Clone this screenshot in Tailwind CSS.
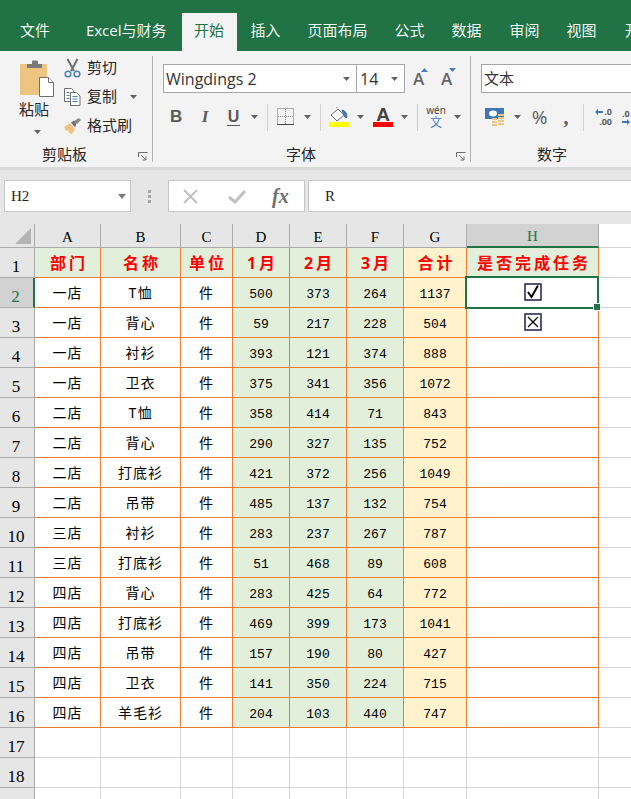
<!DOCTYPE html><html lang="zh-CN">
<head>
  <meta charset="UTF-8">
  <title>Excel</title>
  <script src="https://cdn.jsdelivr.net/npm/@tailwindcss/browser@4"></script>
</head>
<body class="w-[631px] h-[799px] overflow-hidden bg-white text-[#262626] font-['Noto_Sans','Noto_Sans_CJK_SC',sans-serif]">

  <!-- tabs -->
  <div class="h-[51px] bg-[#217346] flex items-end text-[15px] text-white/95 whitespace-nowrap overflow-hidden">
    <div class="shrink-0 ml-[20px] h-[38px] leading-[34px]">文件</div>
    <div class="shrink-0 ml-[36px] h-[38px] leading-[34px]">Excel与财务</div>
    <div class="shrink-0 ml-[15px] w-[55px] h-[38px] leading-[34px] text-center bg-[#f3f3f3] text-[#217346]">开始</div>
    <div class="shrink-0 ml-[14px] h-[38px] leading-[34px]">插入</div>
    <div class="shrink-0 ml-[27px] h-[38px] leading-[34px]">页面布局</div>
    <div class="shrink-0 ml-[27px] h-[38px] leading-[34px]">公式</div>
    <div class="shrink-0 ml-[27px] h-[38px] leading-[34px]">数据</div>
    <div class="shrink-0 ml-[28px] h-[38px] leading-[34px]">审阅</div>
    <div class="shrink-0 ml-[27px] h-[38px] leading-[34px]">视图</div>
    <div class="shrink-0 ml-[28px] h-[38px] leading-[34px]">开</div>
  </div>

  <!-- ribbon -->
  <div class="h-[119px] bg-[#f3f3f3] border-b-[3px] border-[#d9d9d9] flex overflow-hidden">

    <!-- clipboard -->
    <div class="relative w-[153px] h-[106px] mt-[5px] border-r border-[#b4b4b4] shrink-0">
      <div class="flex">
        <div class="ml-[19px] w-[36px] flex flex-col items-center">
          <svg class="mt-[4px]" width="36" height="37" viewBox="0 0 36 37">
            <rect x="1" y="4" width="27" height="31" rx="1" fill="#edc581"/>
            <path d="M8 8V4h5V1.500q0-1 1-1h4q1 0 1 1V4h4v4z" fill="#7a7a7a"/>
            <path d="M20.500 17.500h9l5 5v14h-14z" fill="#fff" stroke="#6e6e6e"/>
            <path d="M29.500 17.500v5h5" fill="#fff" stroke="#6e6e6e"/>
          </svg>
          <div class="text-[15px] leading-[20px] mt-[2px] ml-[-6px] w-[36px] text-center">粘贴</div>
          <svg class="mt-[11px]" width="7" height="4"><path d="M0 0h7L3.500 4z" fill="#606060"/></svg>
        </div>
        <div class="ml-[9px] flex flex-col">
          <div class="h-[29px] mt-[-3px] flex items-center gap-[6px] text-[15px]">
            <svg width="17" height="20" viewBox="0 0 17 20" fill="none">
              <path d="M3.500 1l6.500 12M13.500 1L7 13" stroke="#6e6e6e" stroke-width="2"/>
              <circle cx="4" cy="16" r="2.800" stroke="#4a7fb8" stroke-width="1.500"/>
              <circle cx="13" cy="16" r="2.800" stroke="#4a7fb8" stroke-width="1.500"/>
            </svg>
            <span>剪切</span>
          </div>
          <div class="h-[29px] flex items-center gap-[6px] text-[15px]">
            <svg width="17" height="18" viewBox="0 0 17 18" fill="none">
              <path d="M.5.500h7l2 2v11H.5z" fill="#fff" stroke="#6e6e6e"/>
              <path d="M6.500 4.500h6l3.500 3.500v9.500H6.500z" fill="#fff" stroke="#6e6e6e"/>
              <path d="M2.500 4.500h3M2.500 7.500h3M2.500 10.500h3" stroke="#4a7fb8"/>
              <path d="M8.500 8.500h5M8.500 11h5M8.500 13.500h5" stroke="#4a7fb8"/>
            </svg>
            <span>复制</span>
            <svg class="ml-[7px]" width="7" height="4"><path d="M0 0h7L3.500 4z" fill="#606060"/></svg>
          </div>
          <div class="h-[29px] flex items-center gap-[6px] text-[15px]">
            <svg width="17" height="16" viewBox="0 0 17 16">
              <path d="M0 9l6-4 5 6-3 5-3-1-1-3-2 1z" fill="#edc581"/>
              <path d="M7 4.500l3-2 2.500 3-1.500 4z" fill="#6e6e6e"/>
              <path d="M10 3l5-3 2 2-4 4z" fill="#8a8a8a"/>
            </svg>
            <span>格式刷</span>
          </div>
        </div>
      </div>
      <div class="absolute left-[42px] top-[88px] text-[15px] leading-[20px]">剪贴板</div>
      <svg class="absolute left-[138px] top-[96px]" width="10" height="10" fill="none" stroke="#6e6e6e"><path d="M.5 5V.500H9.500M3 3l5 5M8 4.500V8H4.500"/></svg>
    </div>

    <!-- font -->
    <div class="relative w-[318px] h-[106px] mt-[5px] border-r border-[#b4b4b4] shrink-0">
      <div class="flex items-center mt-[8px] h-[29px]">
        <div class="ml-[10px] w-[194px] h-[29px] bg-white border border-[#a6a6a6] flex items-center justify-between pl-[2px] pr-[6px] text-[16px]">
          <span class="font-['Open_Sans'] text-[#333]">Wingdings 2</span>
          <svg width="7" height="4"><path d="M0 0h7L3.500 4z" fill="#606060"/></svg>
        </div>
        <div class="ml-[-1px] w-[49px] h-[29px] bg-white border border-[#a6a6a6] flex items-center justify-between pl-[3px] pr-[6px] text-[16px]">
          <span class="font-['Open_Sans'] text-[#333]">14</span>
          <svg width="7" height="4"><path d="M0 0h7L3.500 4z" fill="#606060"/></svg>
        </div>
        <div class="ml-[8px] relative w-[16px] text-[17px] leading-[20px] font-semibold text-[#666] font-['Open_Sans']">A<svg class="absolute left-[8px] top-[-1px]" width="7" height="4"><path d="M0 4h7L3.500 0z" fill="#4a7fb8"/></svg></div>
        <div class="ml-[12px] relative w-[16px] text-[17px] leading-[20px] font-semibold text-[#666] font-['Open_Sans']">A<svg class="absolute left-[8px] top-[-1px]" width="7" height="4"><path d="M0 0h7L3.500 4z" fill="#4a7fb8"/></svg></div>
      </div>
      <div class="flex items-center mt-[10px] h-[28px] text-[#5a5a5a]">
        <span class="ml-[17px] w-[12px] text-center font-bold text-[17px] font-['Liberation_Sans']">B</span>
        <span class="ml-[17px] w-[12px] text-center font-bold italic text-[17px] font-['Liberation_Serif']">I</span>
        <span class="ml-[16px] w-[13px] text-center font-bold text-[16px] leading-[17px] border-b-[1.500px] border-[#555] font-['Liberation_Sans']">U</span>
        <svg class="ml-[11px]" width="7" height="4"><path d="M0 0h7L3.500 4z" fill="#606060"/></svg>
        <div class="ml-[9px] w-px h-[27px] bg-[#d0d0d0]"></div>
        <svg class="ml-[9px]" width="18" height="18" fill="none"><rect x=".5" y=".5" width="16" height="16" stroke="#666" stroke-dasharray="1 1"/><path d="M8.500 1v16M1 8.500h16" stroke="#888" stroke-dasharray="1 1"/><path d="M0 16.500h17" stroke="#444"/></svg>
        <svg class="ml-[9px]" width="7" height="4"><path d="M0 0h7L3.500 4z" fill="#606060"/></svg>
        <div class="ml-[9px] w-px h-[27px] bg-[#d0d0d0]"></div>
        <div class="ml-[8px] w-[20px] flex flex-col items-center">
          <svg width="20" height="15" viewBox="0 0 20 15" fill="none"><path d="M2 8l7-6 6 6-7 6z" fill="#fff" stroke="#6e6e6e"/><path d="M8 1V0M13 3q5 1 5 7-1 2-2 0l-1-2z" fill="#3f76b3" stroke="#3f76b3"/></svg>
          <div class="w-[20px] h-[5px] mt-[0px] bg-[#ffff00]"></div>
        </div>
        <svg class="ml-[8px]" width="7" height="4"><path d="M0 0h7L3.500 4z" fill="#606060"/></svg>
        <div class="ml-[9px] w-[20px] flex flex-col items-center">
          <span class="text-[19px] leading-[15px] font-bold font-['Liberation_Sans'] text-[#444]">A</span>
          <div class="w-[20px] h-[5px] mt-[0px] bg-[#ff0000]"></div>
        </div>
        <svg class="ml-[8px]" width="7" height="4"><path d="M0 0h7L3.500 4z" fill="#606060"/></svg>
        <div class="ml-[9px] w-px h-[27px] bg-[#d0d0d0]"></div>
        <div class="ml-[9px] w-[18px] flex flex-col items-center">
          <span class="text-[10px] leading-[11px] text-[#444]">wén</span>
          <span class="text-[12px] leading-[13px] text-[#4a7fb8]">文</span>
        </div>
        <svg class="ml-[9px]" width="7" height="4"><path d="M0 0h7L3.500 4z" fill="#606060"/></svg>
      </div>
      <div class="absolute left-[133px] top-[88px] text-[15px] leading-[20px]">字体</div>
      <svg class="absolute left-[303px] top-[96px]" width="10" height="10" fill="none" stroke="#6e6e6e"><path d="M.5 5V.500H9.500M3 3l5 5M8 4.500V8H4.500"/></svg>
    </div>

    <!-- number -->
    <div class="relative flex-1 h-[106px] mt-[5px]">
      <div class="mt-[8px] ml-[10px] w-[170px] h-[29px] bg-white border border-[#a6a6a6] flex items-center pl-[2px] text-[15px] text-[#333]">文本</div>
      <div class="flex items-center mt-[10px] h-[28px] text-[#5a5a5a]">
        <svg class="ml-[14px]" width="21" height="21" viewBox="0 0 21 21">
          <rect x="0" y="1" width="19" height="11" fill="#3f76b3"/>
          <ellipse cx="8" cy="6.500" rx="4" ry="3" fill="#fff"/>
          <path d="M7 11h5v2H7zM13 7h6v2h-6zM13 10h6v2h-6zM13 13h6v2h-6zM7 14h5v2H7zM7 17h5v2H7zM13 16h6v2h-6z" fill="#edc581"/>
        </svg>
        <svg class="ml-[8px]" width="7" height="4"><path d="M0 0h7L3.500 4z" fill="#606060"/></svg>
        <span class="ml-[10px] w-[17px] text-center text-[19px] font-['Open_Sans']">%</span>
        <span class="ml-[14px] w-[8px] text-center text-[20px] font-bold leading-[14px] font-['Liberation_Serif']">,</span>
        <div class="ml-[13px] w-px h-[27px] bg-[#d0d0d0]"></div>
        <div class="ml-[10px] w-[18px] flex flex-col items-end text-[9px] leading-[10px] font-bold">
          <div class="flex items-center gap-px"><svg width="8" height="6"><path d="M0 3l3-3v2h5v2H3v2z" fill="#3f76b3"/></svg><span>.0</span></div>
          <span>.00</span>
        </div>
        <div class="ml-[10px] w-[9px] overflow-hidden flex flex-col text-[9px] leading-[10px] font-bold">
          <span>.0</span>
          <svg width="8" height="6"><path d="M8 3L5 0v2H0v2h5v2z" fill="#3f76b3"/></svg>
        </div>
      </div>
      <div class="absolute left-[66px] top-[88px] text-[15px] leading-[20px]">数字</div>
    </div>
  </div>

  <!-- formula bar -->
  <div class="h-[54px] bg-[#e6e6e6] flex pt-[10px]">
    <div class="ml-[4px] w-[127px] h-[32px] bg-white border border-[#c6c6c6] flex items-center justify-between pl-[6px] pr-[4px] text-[15px] font-['Liberation_Serif']">
      <span>H2</span>
      <svg width="8" height="5"><path d="M0 0h8L4 5z" fill="#7a7a7a"/></svg>
    </div>
    <div class="ml-[17px] w-[4px] h-[32px] flex flex-col justify-center gap-[2px]">
      <div class="w-[3px] h-[3px] bg-[#a6a6a6]"></div><div class="w-[3px] h-[3px] bg-[#a6a6a6]"></div><div class="w-[3px] h-[3px] bg-[#a6a6a6]"></div>
    </div>
    <div class="ml-[16px] w-[137px] h-[32px] bg-white border border-[#c6c6c6] flex items-center">
      <svg class="ml-[14px]" width="15" height="15" fill="none" stroke="#c0c0c0" stroke-width="2"><path d="M1 1l13 13M14 1L1 14"/></svg>
      <svg class="ml-[30px]" width="18" height="15" fill="none" stroke="#c0c0c0" stroke-width="3"><path d="M1 8l6 5L17 2"/></svg>
      <span class="ml-[26px] text-[20px] italic font-bold text-[#6e6e6e] font-['Liberation_Serif']">fx</span>
    </div>
    <div class="ml-[3px] flex-1 h-[32px] bg-white border border-[#c6c6c6] border-r-0 flex items-center pl-[16px] text-[15px] font-['Liberation_Serif']">R</div>
  </div>

  <!-- sheet -->
  <div id="sheet" class="relative grid grid-cols-[35px_66px_80px_52px_57px_57px_57px_63px_132px_33px] grid-rows-[24px] auto-rows-[30px] text-black">
    <div class="relative bg-[#e6e6e6] border-r border-b border-[#ababab]">
      <svg class="absolute right-[3px] bottom-[3px]" width="16" height="16"><path d="M16 0v16H0z" fill="#b4b4b4"/></svg>
    </div>
    <!-- selected cell H2 -->
    <div class="absolute left-[465px] top-[52px] w-[134px] h-[33px] border-2 border-[#217346] z-10">
      <div class="absolute right-[-4px] bottom-[-4px] w-[6px] h-[6px] bg-[#217346] border border-white box-content"></div>
    </div>
  </div>

  <script>
    const sheet = document.getElementById('sheet');
    const data = [
      ['一店','T恤','件',500,373,264,1137],['一店','背心','件',59,217,228,504],
      ['一店','衬衫','件',393,121,374,888],['一店','卫衣','件',375,341,356,1072],
      ['二店','T恤','件',358,414,71,843],['二店','背心','件',290,327,135,752],
      ['二店','打底衫','件',421,372,256,1049],['二店','吊带','件',485,137,132,754],
      ['三店','衬衫','件',283,237,267,787],['三店','打底衫','件',51,468,89,608],
      ['四店','背心','件',283,425,64,772],['四店','打底衫','件',469,399,173,1041],
      ['四店','吊带','件',157,190,80,427],['四店','卫衣','件',141,350,224,715],
      ['四店','羊毛衫','件',204,103,440,747]
    ];
    const head = ['部门','名称','单位','1月','2月','3月','合计','是否完成任务'];
    let html = '';

    // column letters
    'ABCDEFGH'.split('').forEach(c => {
      const on = c === 'H';
      html += `<div class="flex items-end justify-center text-[15px] leading-[20px] font-['Liberation_Serif'] border-r border-[#ababab] ${on ? 'bg-[#d2d2d2] text-[#217346] border-b-2 border-b-[#217346]' : 'bg-[#e6e6e6] border-b border-b-[#ababab]'}">${c}</div>`;
    });
    html += '<div class="border-b border-[#d4d4d4]"></div>';

    function rowHead(n) {
      const on = n === 2;
      const label = n < 19 ? n : '';
      return `<div class="flex items-end justify-center pr-[2px] text-[17px] leading-[20px] font-['Liberation_Serif'] border-b border-[#ababab] ${on ? 'bg-[#d2d2d2] text-[#217346] border-r-2 border-r-[#217346]' : 'bg-[#e6e6e6] border-r border-r-[#ababab]'}">${label}</div>`;
    }

    // title row
    html += rowHead(1);
    head.forEach((t, i) => {
      const bg = i === 6 ? 'bg-[#fff2cc]' : 'bg-[#e2efda]';
      html += `<div class="${bg} flex items-center justify-center pl-[3px] text-[16px] font-bold text-[#ff0000] tracking-[3px] border-r border-b border-[#ed7d31] whitespace-nowrap">${t}</div>`;
    });
    html += '<div class="border-b border-[#d4d4d4]"></div>';

    // data rows
    for (let n = 2; n <= 19; n++) {
      html += rowHead(n);
      const row = data[n - 2];
      for (let c = 0; c < 8; c++) {
        if (!row) {
          html += '<div class="border-r border-b border-[#d4d4d4]"></div>';
        } else if (c < 3) {
          html += `<div class="flex items-center justify-center pt-[3px] text-[14px] tracking-[1px] font-['Liberation_Mono','Noto_Sans_CJK_SC'] border-r border-b border-[#ed7d31]">${row[c]}</div>`;
        } else if (c < 7) {
          const bg = c === 6 ? 'bg-[#fff2cc]' : 'bg-[#e2efda]';
          html += `<div class="${bg} flex items-center justify-center pt-[4px] text-[13px] font-['Liberation_Mono'] border-r border-b border-[#ed7d31]">${row[c]}</div>`;
        } else if (n === 2) {
          html += `<div class="flex items-center justify-center pb-[1px] border-r border-b border-[#ed7d31]"><svg width="18" height="18" fill="none"><rect x="1" y="1" width="16" height="16" stroke="#1f1f4d" stroke-width="1.500"/><path d="M4 9l3.500 5L14 2.500" stroke="#000" stroke-width="2"/></svg></div>`;
        } else if (n === 3) {
          html += `<div class="flex items-center justify-center pb-[1px] border-r border-b border-[#ed7d31]"><svg width="18" height="18" fill="none"><rect x="1" y="1" width="16" height="16" stroke="#1f1f4d" stroke-width="1.500"/><path d="M4 4l10 10M14 4L4 14" stroke="#000" stroke-width="1.200"/></svg></div>`;
        } else {
          html += '<div class="border-r border-b border-[#ed7d31]"></div>';
        }
      }
      html += '<div class="border-b border-[#d4d4d4]"></div>';
    }
    sheet.insertAdjacentHTML('beforeend', html);
  </script>
</body>
</html>
